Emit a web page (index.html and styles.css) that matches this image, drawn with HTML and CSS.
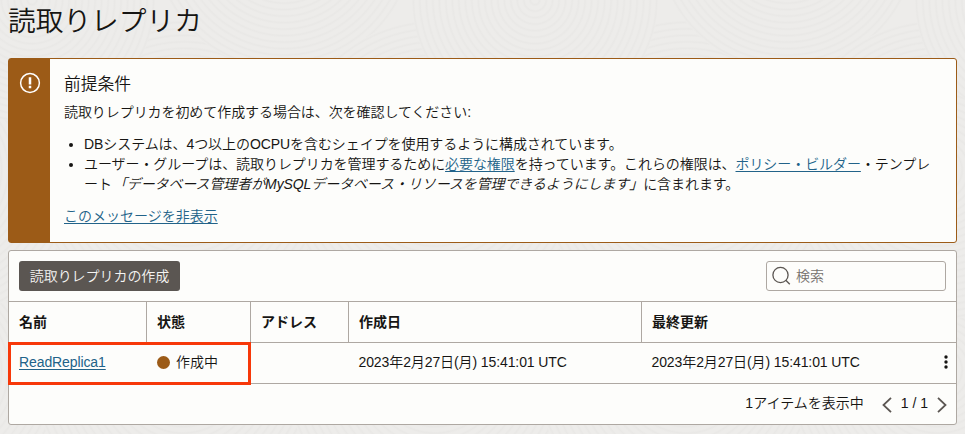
FILE: index.html
```
<!DOCTYPE html>
<html lang="ja">
<head>
<meta charset="utf-8">
<title>読取りレプリカ</title>
<link rel="stylesheet" href="styles.css">
</head>
<body>
<svg class="backdrop" width="965" height="434" aria-hidden="true">
  <defs>
    <radialGradient id="ripple" gradientUnits="userSpaceOnUse" cx="0" cy="0" r="6.5" spreadMethod="repeat">
      <stop offset="0" stop-color="#edecea"/>
      <stop offset=".45" stop-color="#edecea"/>
      <stop offset=".7" stop-color="#e9e8e6"/>
      <stop offset="1" stop-color="#edecea"/>
    </radialGradient>
    <g id="tile" fill="url(#ripple)">
      <circle r="150" transform="translate(-100 170)"/>
      <circle r="150" transform="translate(152 170)"/>
      <circle r="130" transform="translate(252 -60)"/>
      <circle r="123" transform="translate(0 0)"/>
    </g>
  </defs>
  <use href="#tile" x="32" y="400"/>
  <use href="#tile" x="535" y="400"/>
  <use href="#tile" x="1038" y="400"/>
  <use href="#tile" x="-220" y="200"/>
  <use href="#tile" x="283" y="200"/>
  <use href="#tile" x="786" y="200"/>
  <use href="#tile" x="32" y="0"/>
  <use href="#tile" x="535" y="0"/>
  <use href="#tile" x="1038" y="0"/>
</svg>
<main>
  <h1>読取りレプリカ</h1>

  <section class="notice">
    <div class="notice-side">
      <svg width="22" height="22" viewBox="0 0 22 22" fill="none" stroke="#fff">
        <circle cx="11" cy="11" r="9.4" stroke-width="1.5"/>
        <path d="M11 5.2v7.4M11 13.8v2.4" stroke-width="2.5"/>
      </svg>
    </div>
    <div class="notice-body">
      <h2>前提条件</h2>
      <p>読取りレプリカを初めて作成する場合は、次を確認してください:</p>
      <ul>
        <li>DBシステムは、4つ以上のOCPUを含むシェイプを使用するように構成されています。</li>
        <li>ユーザー・グループは、読取りレプリカを管理するために<a href="#">必要な権限</a>を持っています。これらの権限は、<a href="#">ポリシー・ビルダー</a>・テンプレ<br>ート<em>「データベース管理者がMySQLデータベース・リソースを管理できるようにします」</em>に含まれます。</li>
      </ul>
      <a href="#">このメッセージを非表示</a>
    </div>
  </section>

  <section class="panel">
    <div class="toolbar">
      <button class="create">読取りレプリカの作成</button>
      <div class="search">
        <svg width="20" height="20" viewBox="0 0 20 20" fill="none" stroke="#5b5652" stroke-width="1.3">
          <circle cx="8.5" cy="9" r="7.6"/>
          <path d="M13.8 14.3l4 4"/>
        </svg>
        <span>検索</span>
      </div>
    </div>
    <div class="row head">
      <div>名前</div><div>状態</div><div>アドレス</div><div>作成日</div><div>最終更新</div>
    </div>
    <div class="row data">
      <div><a href="#">ReadReplica1</a></div>
      <div class="state"><i class="dot"></i>作成中</div>
      <div></div>
      <div>2023年2月27日(月) 15:41:01 UTC</div>
      <div class="last">2023年2月27日(月) 15:41:01 UTC
        <svg width="4" height="14" viewBox="0 0 4 14" fill="#161513"><circle cx="2" cy="2" r="1.7"/><circle cx="2" cy="7" r="1.7"/><circle cx="2" cy="12" r="1.7"/></svg>
      </div>
      <span class="highlight"></span>
    </div>
    <div class="pager">
      <span class="count">1アイテムを表示中</span>
      <svg width="10" height="16" viewBox="0 0 10 16" fill="none" stroke="#5b5652" stroke-width="1.8"><path d="M9 .8L1.5 8 9 15.2"/></svg>
      <span class="page">1 / 1</span>
      <svg width="10" height="16" viewBox="0 0 10 16" fill="none" stroke="#5b5652" stroke-width="1.8"><path d="M1 .8L8.5 8 1 15.2"/></svg>
    </div>
  </section>
</main>
</body>
</html>
```
FILE: styles.css
```
* { box-sizing: border-box; }
body {
  margin: 0;
  height: 434px;
  overflow: hidden;
  background: #edecea;
  color: #161513;
  font: 350 14px/20px "Liberation Sans", "Noto Sans CJK JP", sans-serif;
}
.backdrop { position: absolute; left: 0; top: 0; z-index: -1; }
main { padding: 0 8px; }
h1 {
  margin: 0;
  height: 58px;
  font-size: 27.7px;
  font-weight: 350;
  line-height: 44px;
}
a { color: #226389; text-underline-offset: 2px; text-decoration-skip-ink: none; }
.notice {
  display: flex;
  height: 185px;
  border: 1px solid #9c5b17;
  border-radius: 3px;
  background: #fdfdfb;
}
.notice-side {
  flex: 0 0 41px;
  padding: 13px 0 0 10px;
  background: #9c5b17;
}
.notice-body { padding: 16px 0 0 14px; }
h2 { margin: 0 0 7px; font-size: 16.8px; font-weight: 350; line-height: 20px; }
p { margin: 0; letter-spacing: -.07px; }
ul { margin: 12px 0; padding-left: 20px; }
li { letter-spacing: -.07px; }
em { margin-left: 1px; letter-spacing: -.1px; }
.panel {
  margin-top: 7px;
  height: 175px;
  border: 1px solid #aea8a2;
  border-radius: 3px;
  background: #fdfdfb;
}
.toolbar {
  display: flex;
  justify-content: space-between;
  height: 50px;
  padding: 10px 10px 0;
}
.create {
  width: 161px;
  height: 30px;
  padding: 0 0 1px;
  border: 0;
  border-radius: 3px;
  background: #5b5652;
  color: #f5f4f2;
  font: inherit;
  letter-spacing: -.05px;
}
.search {
  display: flex;
  align-items: center;
  gap: 4px;
  width: 180px;
  height: 30px;
  padding: 0 0 1px 5px;
  border: 1px solid #aea8a2;
  border-radius: 3px;
  color: #75716d;
}
.row {
  position: relative;
  display: grid;
  grid-template-columns: 137px 104px 98px 293px 1fr;
  height: 41px;
  border-top: 1px solid #aea8a2;
  line-height: 40px;
}
.row > div { padding-left: 10px; }
.head { font-weight: 700; }
.head > div + div { border-left: 1px solid #aea8a2; }
.data { line-height: 38px; letter-spacing: -.1px; }
.data > div + div { padding-left: 10.5px; }
.data > .state { display: flex; align-items: center; gap: 6px; height: 38px; padding-left: 11px; letter-spacing: 0; }
.dot { width: 13px; height: 13px; border-radius: 50%; background: #9c5b17; }
.last { display: flex; height: 38px; align-items: center; justify-content: space-between; padding-right: 8px; }
.highlight {
  position: absolute;
  left: -1px;
  top: -1px;
  width: 243px;
  height: 43px;
  border: 3px solid #f73809;
}
.pager {
  display: flex;
  align-items: center;
  justify-content: flex-end;
  height: 41px;
  padding-right: 9px;
  border-top: 1px solid #aea8a2;
}
.pager svg { position: relative; top: 1px; }
.pager span { padding-bottom: 2px; }
.count { margin-right: 18px; }
.page { margin: 0 9px; }
```
